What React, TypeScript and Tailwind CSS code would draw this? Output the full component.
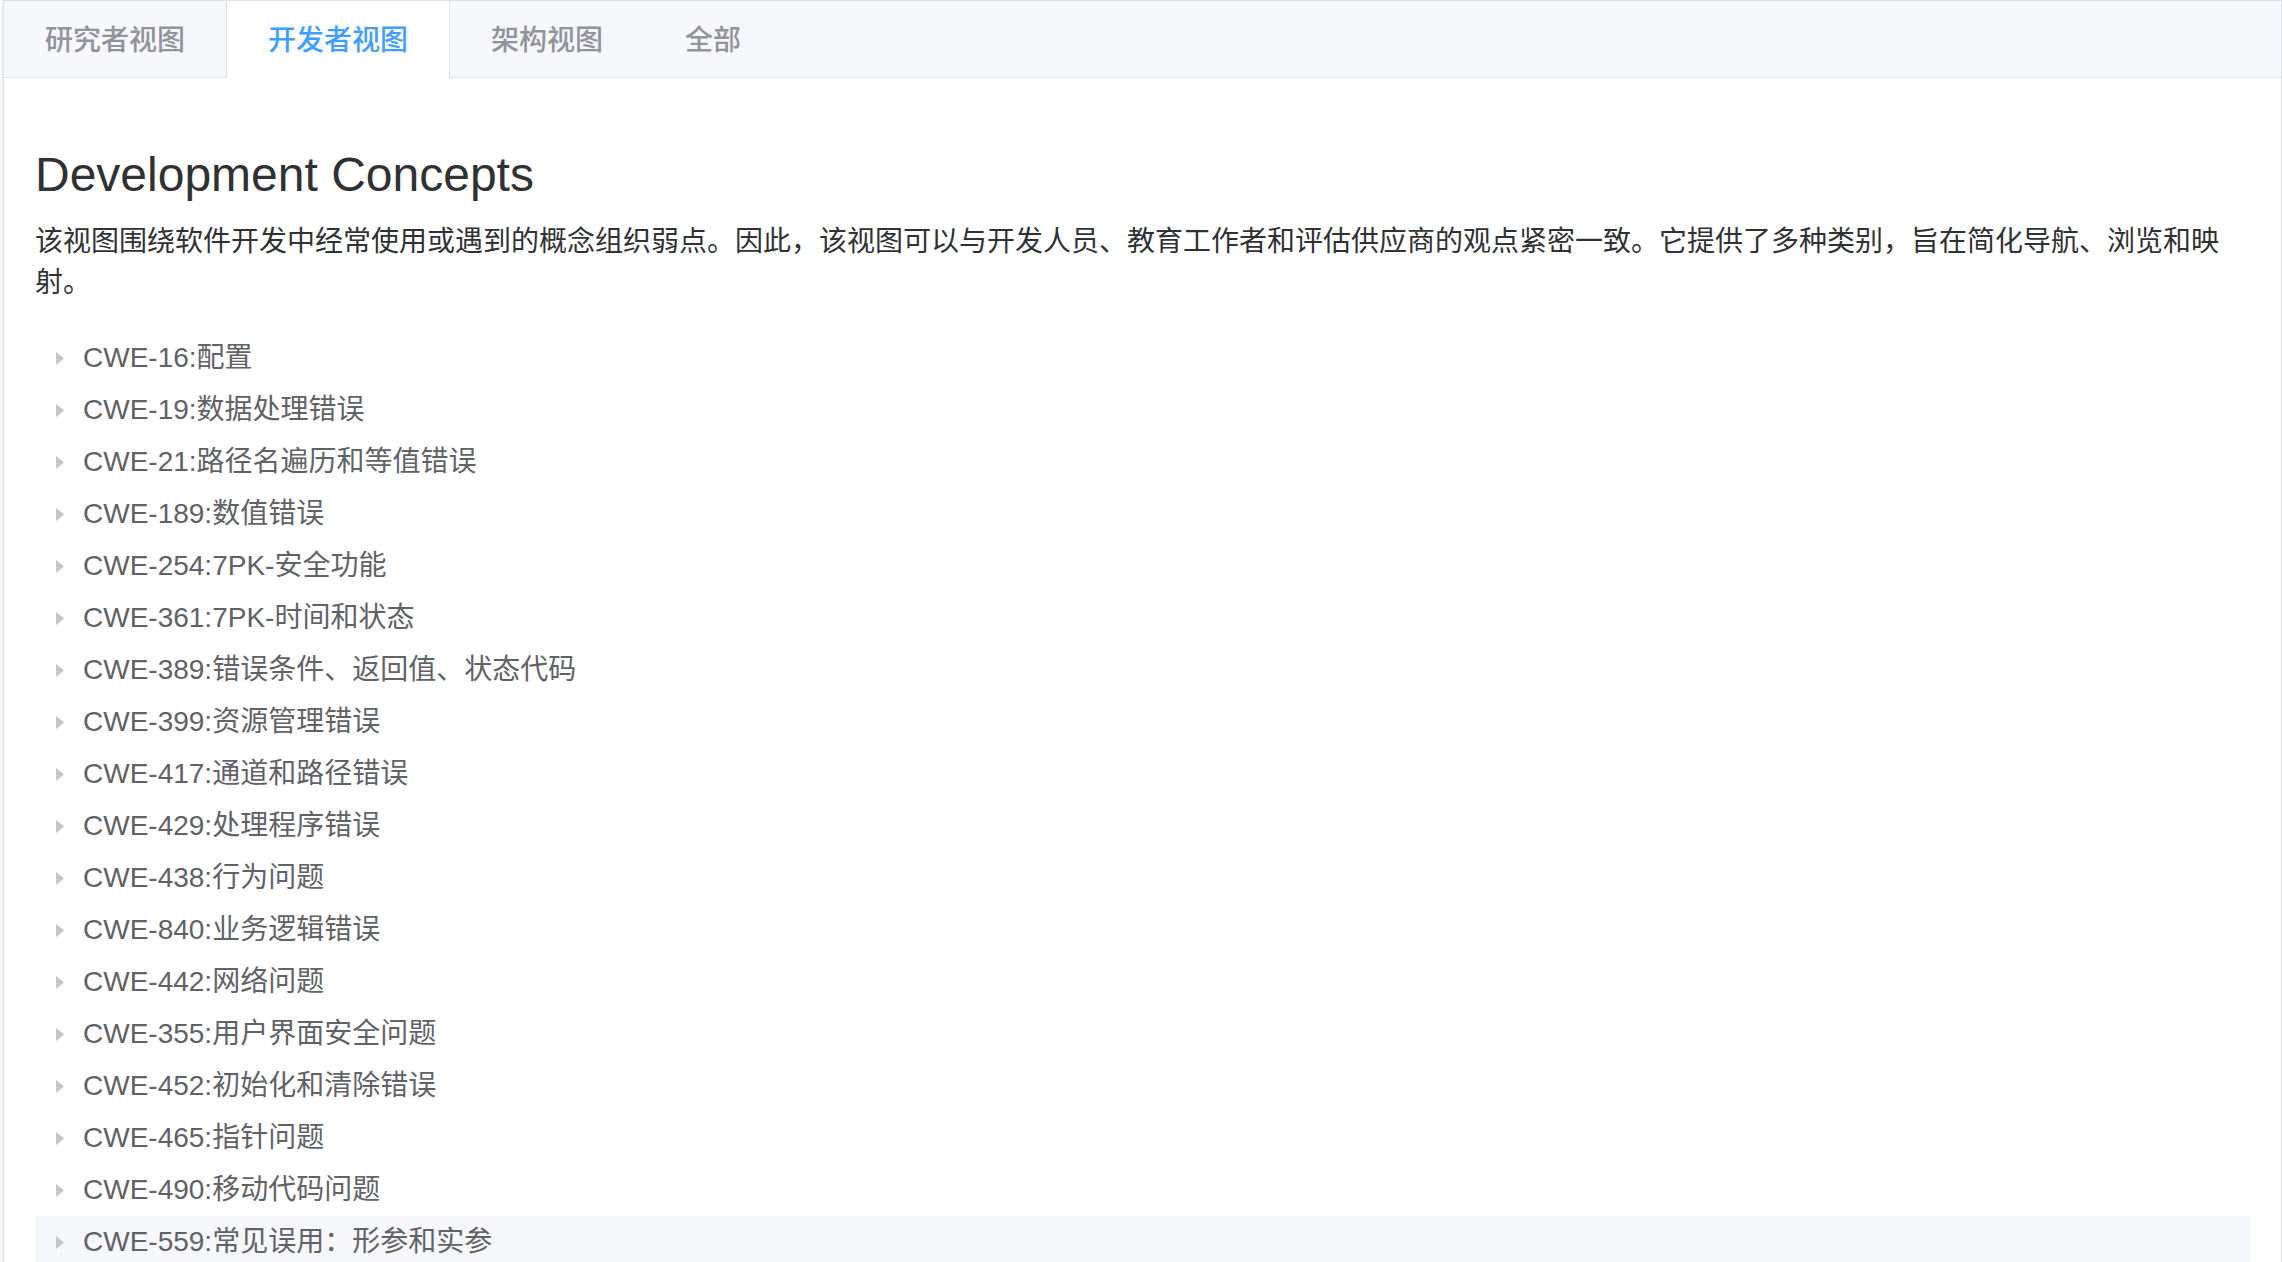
const tabs = ["研究者视图", "开发者视图", "架构视图", "全部"];

const items = [
  "CWE-16:配置",
  "CWE-19:数据处理错误",
  "CWE-21:路径名遍历和等值错误",
  "CWE-189:数值错误",
  "CWE-254:7PK-安全功能",
  "CWE-361:7PK-时间和状态",
  "CWE-389:错误条件、返回值、状态代码",
  "CWE-399:资源管理错误",
  "CWE-417:通道和路径错误",
  "CWE-429:处理程序错误",
  "CWE-438:行为问题",
  "CWE-840:业务逻辑错误",
  "CWE-442:网络问题",
  "CWE-355:用户界面安全问题",
  "CWE-452:初始化和清除错误",
  "CWE-465:指针问题",
  "CWE-490:移动代码问题",
  "CWE-559:常见误用：形参和实参",
];

function Caret() {
  return (
    <svg width="8" height="13" viewBox="0 0 8 13" className="shrink-0">
      <path d="M0 0 L8 6.5 L0 13 Z" fill="#c0c4cc" />
    </svg>
  );
}

export default function App() {
  return (
    <div className="min-h-screen bg-white font-['Liberation_Sans','Noto_Sans_CJK_SC',sans-serif]">
      <div className="ml-[3px] min-h-[1262px] border border-[#dcdfe6] bg-white shadow-[0_2px_4px_0_rgba(0,0,0,0.12),0_0_6px_0_rgba(0,0,0,0.04)]">
        <div className="flex h-[77px] border-b border-[#e4e7ed] bg-[#f5f7fa]">
          {tabs.map((t, i) =>
            i === 1 ? (
              <div
                key={t}
                className="-mb-px flex h-[77px] items-center border-x border-[#dcdfe6] bg-white px-[41px] pt-[3px] text-[28px] font-medium text-[#409eff]"
              >
                {t}
              </div>
            ) : (
              <div
                key={t}
                className="flex items-center px-[41px] pt-[3px] text-[28px] font-medium text-[#909399]"
              >
                {t}
              </div>
            )
          )}
        </div>

        <div className="pl-[31px] pr-[30px] pt-[69px]">
          <h1 className="text-[48px] leading-[56px] text-[#303133]">Development Concepts</h1>
          <p className="mt-[18px] max-w-[2200px] text-[28px] leading-[41px] text-[#303133]">
            该视图围绕软件开发中经常使用或遇到的概念组织弱点。因此，该视图可以与开发人员、教育工作者和评估供应商的观点紧密一致。它提供了多种类别，旨在简化导航、浏览和映射。
          </p>

          <ul className="mt-[29px]">
            {items.map((it, i) => (
              <li
                key={it}
                className={`flex h-[52px] items-center pl-[21px] text-[28px] text-[#606266] ${
                  i === items.length - 1 ? "bg-[#f5f7fa]" : ""
                }`}
              >
                <Caret />
                <span className="ml-[19px]">{it}</span>
              </li>
            ))}
          </ul>
        </div>
      </div>
    </div>
  );
}
